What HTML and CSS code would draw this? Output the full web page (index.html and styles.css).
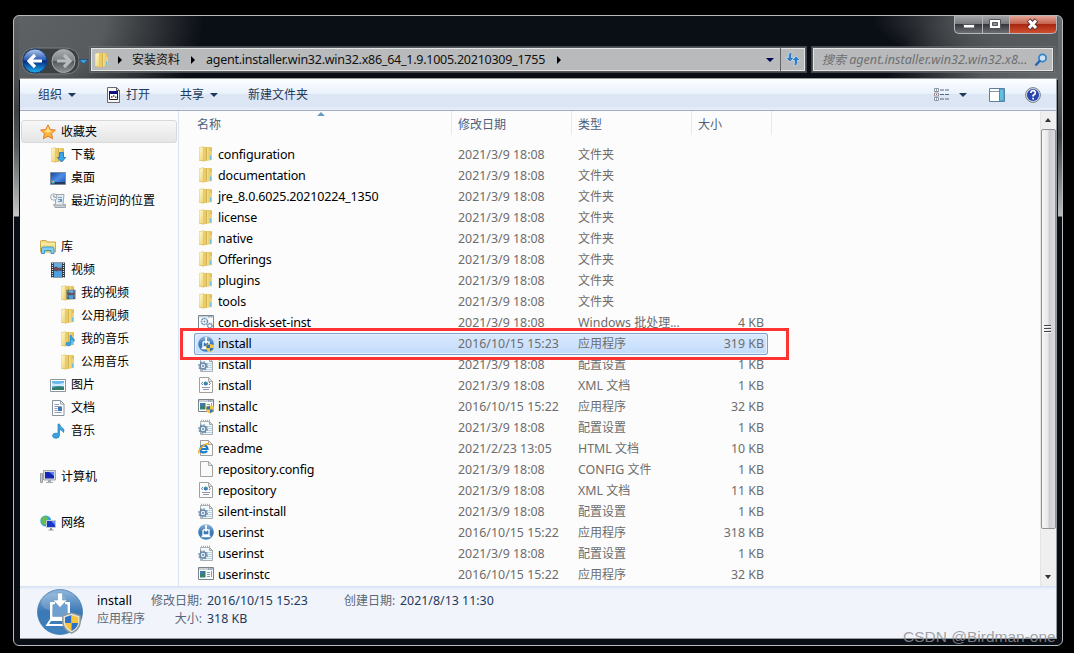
FILE: index.html
```html
<!DOCTYPE html>
<html lang="zh-CN">
<head>
<meta charset="utf-8">
<title>安装资料</title>
<link rel="stylesheet" href="styles.css">
</head>
<body>
<svg class="defs" width="0" height="0" aria-hidden="true">
  <defs>
    <linearGradient id="gFold" x1="0" y1="0" x2="1" y2="1"><stop offset="0" stop-color="#fffbd0"/><stop offset="1" stop-color="#eed16f"/></linearGradient>
    <linearGradient id="gFold2" x1="0" y1="0" x2="1" y2="0"><stop offset="0" stop-color="#c79f3c"/><stop offset=".3" stop-color="#f1dc83"/><stop offset="1" stop-color="#e2bf58"/></linearGradient>
    <linearGradient id="gBlue" x1="0" y1="0" x2="0" y2="1"><stop offset="0" stop-color="#8fb7dc"/><stop offset=".5" stop-color="#3b78b5"/><stop offset="1" stop-color="#3f83be"/></linearGradient>
    <linearGradient id="gScreen" x1="0" y1="0" x2="1" y2="1"><stop offset="0" stop-color="#1b3f9c"/><stop offset=".5" stop-color="#4c8ee8"/><stop offset="1" stop-color="#1c4fae"/></linearGradient>
    <linearGradient id="gBack" x1="0" y1="0" x2="0" y2="1"><stop offset="0" stop-color="#b4cbea"/><stop offset=".45" stop-color="#2b5bb4"/><stop offset=".5" stop-color="#06297e"/><stop offset="1" stop-color="#20b4f4"/></linearGradient>
    <linearGradient id="gFwd" x1="0" y1="0" x2="0" y2="1"><stop offset="0" stop-color="#aaaeb0"/><stop offset=".48" stop-color="#7d8284"/><stop offset=".52" stop-color="#54595b"/><stop offset="1" stop-color="#8b9092"/></linearGradient>
  </defs>
  <symbol id="folder" viewBox="0 0 16 16"><path d="M1 1.500 4.500.5 7 1h6l1 1v12l-5 .5-3.500 1L1 14.500z" fill="#dcb857"/><path d="M1.300 1.800 5.500.8v14L1.300 14z" fill="url(#gFold)"/><path d="M5.500 1.200 8 1v13.500l-2.500.8z" fill="#e8cc6c"/><path d="M8 1.200h5v12.600l-5 .6z" fill="url(#gFold2)"/><path d="M12.300 5h1.500v8.500h-1.500z" fill="#f0d988"/><path d="M12 9.500h1.300v4H12z" fill="#69bfe6"/></symbol>
  <symbol id="app" viewBox="0 0 16 16"><circle cx="8" cy="8" r="7.800" fill="url(#gBlue)"/><path d="M5 6v5h6V6H9.500M6.500 6H5M3.500 12.500h9" fill="none" stroke="#fff" stroke-width="1.300"/><path d="M7.200 1h1.700v4h1.500L8 8 5.800 5h1.400z" fill="#fff"/></symbol>
  <symbol id="shield" viewBox="0 0 16 16"><path d="M8 1 14 3v5q-1 5-6 7Q3 13 2 8V3z" fill="#e6e6df" stroke="#8d9699"/><path d="M3.500 4 8 2.500V8H3.500z" fill="#2c71c4"/><path d="M8 2.500 12.700 4v4H8zM3.500 8H8v5.500Q4.500 12 3.500 8z" fill="#f7c63c"/><path d="M8 8h4.700q-1 4-4.700 5.500z" fill="#2c71c4"/></symbol>
  <symbol id="smallshield" viewBox="0 0 8 8"><path d="M4 0 8 1v3Q7.500 7 4 8 .5 7 0 4V1z" fill="#f7c63c"/><path d="M.5 1.300 4 .5V4H.500zM4 4h3.500Q7 6.500 4 7.500z" fill="#2c71c4"/></symbol>
  <symbol id="appshield" viewBox="0 0 16 16"><use href="#app"/><use href="#smallshield" x="8" y="8" width="8" height="8"/></symbol>
  <symbol id="ini" viewBox="0 0 16 16"><path d="M2.500 2.500h9l3 3v10h-12z" fill="#f5f8fa" stroke="#a9b0b4"/><path d="M11.500 2.500v3h3z" fill="#dfe3e5" stroke="#a0a7ab"/><path d="M3 .8h1v2.200H3zm2 0h1v2.200H5zm2 0h1v2.200H7zm2 0h1v2.200H9zm2 0h1v2.200h-1z" fill="#a5adb2"/><path d="M4 7.500h10M4 9.500h10M4 11.500h10M4 13.500h10" stroke="#b4d3e6"/><circle cx="5" cy="10" r="3" fill="#e9eff5" stroke="#6888a8" stroke-width="1.600"/><circle cx="5" cy="10" r="4.300" fill="none" stroke="#6f8daa" stroke-width="1.200" stroke-dasharray="1.500 1.870"/><circle cx="5" cy="10" r="1" fill="#6888a8"/></symbol>
  <symbol id="xml" viewBox="0 0 16 16"><path d="M1.500.5h9l4 4v11h-13z" fill="#fdfdfd" stroke="#a0a0a0"/><path d="M10.500.5v4h4z" fill="#e5e5e5" stroke="#a8a8a8"/><circle cx="7.800" cy="6.500" r="2.100" fill="#3378bd"/><path d="M7 5h2l-1 2z" fill="#4bb35d"/><path d="M4.800 5 3.500 6.500 4.800 8M11 5l1.300 1.500L11 8" fill="none" stroke="#67758b"/><path d="M4 10.500h8M5 12.500h6" stroke="#9697a9"/></symbol>
  <symbol id="bat" viewBox="0 0 16 16"><path d="M.5 1.500h15v13H.5z" fill="#f8fafc" stroke="#7a8791"/><path d="M1 2h14v1.500H1z" fill="#c9d3da"/><path d="M10 2.800h4" stroke="#7d8994" stroke-dasharray="1 .5"/><circle cx="6.500" cy="7.500" r="3" fill="#fff" stroke="#6a90b4" stroke-width="1.500" stroke-dasharray="1.600 .5"/><circle cx="6.500" cy="7.500" r="1" fill="#6a90b4"/><circle cx="11.800" cy="11.800" r="2.200" fill="#fff" stroke="#6585a6" stroke-width="1.500" stroke-dasharray="1.300 .4"/></symbol>
  <symbol id="exe" viewBox="0 0 16 16"><path d="M.5 1.500h15v12H.5z" fill="#fff" stroke="#78838b"/><path d="M1 2h14v2H1z" fill="#c7d0d6"/><path d="M10 3h5" stroke="#667b90" stroke-dasharray="1 .7"/><path d="M2 5h5.500v6.500H2z" fill="#397f70"/><path d="M2 5h3v3H2z" fill="#417bb4"/><path d="M9 6.500h3M9 8.500h3M9 10.500h3M13.500 5v6" stroke="#8a9cac"/></symbol>
  <symbol id="exeshield" viewBox="0 0 16 16"><use href="#exe"/><use href="#smallshield" x="8" y="7" width="8" height="9"/></symbol>
  <symbol id="html" viewBox="0 0 16 16"><path d="M2.500.5h8l4 4v11h-12z" fill="#fdfdfd" stroke="#a0a0a0"/><path d="M10.500.5v4h4z" fill="#e5e5e5" stroke="#a8a8a8"/><path d="M2.700 9h6.800Q9 5.500 6 5.500T2.500 9 6 12.300q2 0 3-1.500" fill="none" stroke="#1c7dd0" stroke-width="2.200"/><path d="M1 13.500Q-.2 11 4 7t7-3" fill="none" stroke="#edae24" stroke-width="1.400"/></symbol>
  <symbol id="blank" viewBox="0 0 16 16"><path d="M2.500.5h8l4 4v11h-12z" fill="#fafafa" stroke="#a3a3a3"/><path d="M10.500.5v4h4z" fill="#e8e8e8" stroke="#a8a8a8"/></symbol>
  <symbol id="star" viewBox="0 0 16 16"><path d="m8 .8 2.200 4.700 5.200.6-3.900 3.500 1.100 5.100L8 12.200l-4.600 2.500 1.100-5.100L.6 6.100l5.200-.6z" fill="#fbb540" stroke="#e27b25"/><path d="m8 2.500 1.500 4 3 .4L8 8.500 3.500 7l3-.5z" fill="#ffe793"/></symbol>
  <symbol id="download" viewBox="0 0 16 16"><use href="#folder"/><path d="M9.500 5.500h4v5h2.300L11.500 15 7.300 10.500h2.200z" fill="#3ba5ee" stroke="#1c6eb7" stroke-width=".8"/></symbol>
  <symbol id="desktop" viewBox="0 0 16 16"><path d="M.5 2.500h15v12H.5z" fill="url(#gScreen)" stroke="#7b8ca0"/><path d="M1 12h14v2H1z" fill="#243b60"/><circle cx="3" cy="12" r="1.800" fill="#51b4d5"/><path d="M2 11h1v1H2z" fill="#ec6b3c"/><path d="M3 11h1v1H3z" fill="#a7d952"/></symbol>
  <symbol id="recent" viewBox="0 0 16 16"><path d="M5.500 1.500H14l-1 10h2.500v3H5l-1.500-3h2z" fill="#e8ecef" stroke="#9ba6ae"/><path d="M8 4.500h4M8 6.500h3M8 8.500h4" stroke="#73a1c6"/><path d="M10 6h2v2h-2z" fill="#4f96ce"/><path d="M4 12.500h11" stroke="#aeb8be" stroke-width="2"/><circle cx="3.800" cy="4" r="3.200" fill="#f6f8f9" stroke="#9ba6ae"/><path d="M3.800 2v2.200H6" fill="none" stroke="#69747e" stroke-width=".8"/></symbol>
  <symbol id="library" viewBox="0 0 16 16"><path d="M.5 3.500V2L1.500 1.500H6l1 1.500h8.500v10H.5z" fill="#f2df85" stroke="#cca94c"/><path d="M1 5h14" stroke="#fff6bb"/><path d="M1.500 14.500V10q0-2 2-2h8.500q2 0 2 2v4.500h-3V11.500H4.500v3z" fill="#83cdef" stroke="#3c98c8"/></symbol>
  <symbol id="video" viewBox="0 0 16 16"><path d="M1 .5h14v15H1z" fill="#303941"/><path d="M4 1h8v6.500H4z" fill="#68ade1"/><path d="M4 8.500h8V15H4z" fill="#4aa0e3"/><path d="m4 5.500 2-1 3 1.500 3-1v4l-3-1-2 1.500-3-1z" fill="#684d58"/><path d="M2.500 1v15M13.500 1v15" stroke="#d9e1e6" stroke-width="1.200" stroke-dasharray="1 1"/></symbol>
  <symbol id="fvideo" viewBox="0 0 16 16"><use href="#folder"/><use href="#video" x="6" y="4" width="10" height="11"/></symbol>
  <symbol id="note" viewBox="0 0 16 16"><path d="M8 1h1.500q.5 2.500 3 4t1 4.500q-1-2.500-4-3v5.800q0 3-3.500 3-3 0-3.500-2.200 0-3 3.500-3l2 .4z" fill="#3aa3df" stroke="#2480bd" stroke-width=".7"/></symbol>
  <symbol id="fnote" viewBox="0 0 16 16"><use href="#folder"/><use href="#note" x="4" y="3" width="12" height="13"/></symbol>
  <symbol id="picture" viewBox="0 0 16 16"><path d="M.5 2.500h15v12H.5z" fill="#fff" stroke="#8d969c"/><path d="M2 4h12v9H2z" fill="#69b8eb"/><path d="M2 6q4 2 12 0v3H2z" fill="#cfeafa"/><path d="M2 11q5-3 12-1v3H2z" fill="#327d6b"/></symbol>
  <symbol id="doc" viewBox="0 0 16 16"><path d="M2.500.5h8l3.500 3.500v11.500H2.500z" fill="#fdfdfd" stroke="#89929a"/><path d="M10.500.5V4H14M4.500 4.500H9M4.500 6.500h7M4.500 8.500h3M4.500 10.500h3M4.500 12.500h7" fill="none" stroke="#8ca0b8"/><path d="M8 7h4v4H8z" fill="#3e78b8"/></symbol>
  <symbol id="computer" viewBox="0 0 16 16"><path d="M.5 4.500h2v9h-2z" fill="#c8cdcf" stroke="#979ea1"/><path d="M3.500 1.500h12v9.500h-12z" fill="#d9dcde" stroke="#9fa7ac"/><path d="M5 3h9v6.500H5z" fill="#1426b5"/><path d="M9 3h5v4z" fill="#577df0"/><path d="M8 11h3v2h2v1H6v-1h2z" fill="#a3aab0"/></symbol>
  <symbol id="network" viewBox="0 0 16 16"><circle cx="5.800" cy="6" r="5.500" fill="#3ba4df"/><path d="M2 2q3 0 4-1.500L8 4 6 6l1 3-4 1Q1 7 2 2z" fill="#67bd55"/><path d="M6.500 5.500h9v7h-9z" fill="#1836c8" stroke="#c4cbd0"/><path d="M11 6h4v4z" fill="#668cf0"/><path d="M10 13h2v1.500h1.500v1h-5v-1H10z" fill="#8e999e"/></symbol>
</svg>

<main class="window">
  <header class="frame-top">
    <div class="caption">
      <span class="cap min"><svg width="28" height="17"><path d="M9.500 8.500h11v3.500h-11z" fill="#fff" stroke="#51545a"/></svg></span>
      <span class="cap max"><svg width="26" height="17"><path d="M7.500 3.500h11v9h-11z" fill="#fff" stroke="#51545a"/><path d="M10.500 6.500h5v3h-5z" fill="#8d8f93" stroke="#51545a"/></svg></span>
      <span class="cap close"><svg width="47" height="17"><path d="m19.500 4 8 8.500m0-8.500-8 8.500" stroke="#60383a" stroke-width="5"/><path d="m20 4.500 7 7.500m0-7.500-7 7.500" stroke="#fff" stroke-width="3"/></svg></span>
    </div>
    <div class="navbar">
      <svg class="nav-buttons" width="69" height="28"><path d="M14 1h30q14 0 14 13T44 27H14Q1 27 1 14T14 1z" fill="#3c4043" stroke="#777c80"/><circle cx="14" cy="14" r="12" fill="url(#gBack)" stroke="#183e79"/><path d="M8 14h13M14 8l-6 6 6 6" fill="none" stroke="#fff" stroke-width="3.200"/><circle cx="42.500" cy="14" r="11.500" fill="url(#gFwd)" stroke="#a8acae"/><path d="M36 14h13M43 8l6 6-6 6" fill="none" stroke="#b8bcbe" stroke-width="3.200"/><path d="M58 12.500h9l-4.500 4.500z" fill="#3ba1e2" stroke="#164a79" stroke-width=".8"/></svg>
      <div class="address">
        <svg class="i16"><use href="#folder"/></svg>
        <i class="tri right a1"></i><span class="crumb1">安装资料</span>
        <i class="tri right a2"></i><span class="crumb2">agent.installer.win32.win32.x86_64_1.9.1005.20210309_1755</span>
        <i class="tri right a3"></i>
        <i class="tri down history"></i>
        <span class="refresh"><svg width="16" height="16"><path d="M7 1Q3.500 1 3.500 4.500V6.500H.8L5 11l4.200-4.500H6.500V4.500zM9 15q3.500 0 3.500-3.500V9.500h2.700L11 5 6.800 9.500h2.700v2z" fill="#2d7cc6" stroke="#e3edf3" stroke-width=".6"/></svg></span>
      </div>
      <div class="search"><span>搜索 <b>agent.installer.win32.win32.x8...</b></span>
        <svg width="14" height="14"><circle cx="8.500" cy="5" r="3.600" fill="#d2e1ef" stroke="#3486cb" stroke-width="1.800"/><path d="m6 7.500-4.500 5" stroke="#2566b5" stroke-width="2.400"/></svg></div>
    </div>
  </header>

  <div class="client">
    <nav class="toolbar">
      <span class="t-org">组织<i class="tri down"></i></span>
      <span class="t-open"><svg width="15" height="16"><path d="M1.500.5h9l3 3v12h-12z" fill="#f7f7f7" stroke="#6a6a6a"/><path d="M10.500.5v3h3" fill="none" stroke="#555"/><path d="M3.500 4.500h8v8h-8z" fill="#fff" stroke="#222"/><path d="M3 4h9v3H3z" fill="#101080"/><path d="M5 9h1.500v2H5z" fill="#d43b3b"/><path d="M7 8h1.500v2H7z" fill="#30a040"/><path d="M9 9.500h1.500V11H9z" fill="#3044d0"/></svg>打开</span>
      <span class="t-share">共享<i class="tri down"></i></span>
      <span class="t-new">新建文件夹</span>
      <svg class="t-view" width="16" height="14"><path d="M.5.500h4v3h-4zm0 4.500h4v3h-4zm0 4.500h4v3h-4z" fill="#fff" stroke="#8995a2"/><path d="M2 2h1M2 11h1" stroke="#345" /><path d="M2 6.500h1" stroke="#e33"/><path d="M6 2h9M6 6.500h9M6 11h9" stroke="#536a84" stroke-dasharray="4 1"/></svg>
      <i class="tri down t-viewtri"></i>
      <svg class="t-pane" width="16" height="14"><path d="M.5.500h15v13H.5z" fill="#fff" stroke="#5c7f9e"/><path d="M1 3.500h9" stroke="#8097ac"/><path d="M10.500 1H15v12h-4.500z" fill="#63bfe0" stroke="#508aad"/></svg>
      <svg class="t-help" width="16" height="16"><circle cx="8" cy="8" r="7.400" fill="#d8dce3" stroke="#7b828c"/><circle cx="8" cy="8" r="6" fill="#2946ae"/><path d="M5.800 6q0-2.300 2.300-2.300T10.300 6Q10.300 7.200 8.100 8.500V9.600M8.100 10.700v1.700" fill="none" stroke="#fff" stroke-width="1.700"/></svg>
    </nav>

    <div class="body">
      <aside class="tree">
        <div class="node l0 active"><svg class="i16"><use href="#star"/></svg>收藏夹</div>
        <div class="node l1"><svg class="i16"><use href="#download"/></svg>下载</div>
        <div class="node l1"><svg class="i16"><use href="#desktop"/></svg>桌面</div>
        <div class="node l1"><svg class="i16"><use href="#recent"/></svg>最近访问的位置</div>
        <div class="node l0 group"><svg class="i16"><use href="#library"/></svg>库</div>
        <div class="node l1"><svg class="i16"><use href="#video"/></svg>视频</div>
        <div class="node l2"><svg class="i16"><use href="#fvideo"/></svg>我的视频</div>
        <div class="node l2"><svg class="i16"><use href="#folder"/></svg>公用视频</div>
        <div class="node l2"><svg class="i16"><use href="#fnote"/></svg>我的音乐</div>
        <div class="node l2"><svg class="i16"><use href="#folder"/></svg>公用音乐</div>
        <div class="node l1"><svg class="i16"><use href="#picture"/></svg>图片</div>
        <div class="node l1"><svg class="i16"><use href="#doc"/></svg>文档</div>
        <div class="node l1"><svg class="i16"><use href="#note"/></svg>音乐</div>
        <div class="node l0 group"><svg class="i16"><use href="#computer"/></svg>计算机</div>
        <div class="node l0 group"><svg class="i16"><use href="#network"/></svg>网络</div>
      </aside>

      <section class="list">
        <div class="heads"><span>名称</span><span>修改日期</span><span>类型</span><span>大小</span><i class="sort"></i></div>
        <div class="row"><svg class="i16"><use href="#folder"/></svg><b>configuration</b><span>2021/3/9 18:08</span><em>文件夹</em><u></u></div>
        <div class="row"><svg class="i16"><use href="#folder"/></svg><b>documentation</b><span>2021/3/9 18:08</span><em>文件夹</em><u></u></div>
        <div class="row"><svg class="i16"><use href="#folder"/></svg><b>jre_8.0.6025.20210224_1350</b><span>2021/3/9 18:08</span><em>文件夹</em><u></u></div>
        <div class="row"><svg class="i16"><use href="#folder"/></svg><b>license</b><span>2021/3/9 18:08</span><em>文件夹</em><u></u></div>
        <div class="row"><svg class="i16"><use href="#folder"/></svg><b>native</b><span>2021/3/9 18:08</span><em>文件夹</em><u></u></div>
        <div class="row"><svg class="i16"><use href="#folder"/></svg><b>Offerings</b><span>2021/3/9 18:08</span><em>文件夹</em><u></u></div>
        <div class="row"><svg class="i16"><use href="#folder"/></svg><b>plugins</b><span>2021/3/9 18:08</span><em>文件夹</em><u></u></div>
        <div class="row"><svg class="i16"><use href="#folder"/></svg><b>tools</b><span>2021/3/9 18:08</span><em>文件夹</em><u></u></div>
        <div class="row"><svg class="i16"><use href="#bat"/></svg><b>con-disk-set-inst</b><span>2021/3/9 18:08</span><em><s>Windows </s>批处理...</em><u>4 KB</u></div>
        <div class="row selected"><svg class="i16"><use href="#appshield"/></svg><b>install</b><span>2016/10/15 15:23</span><em>应用程序</em><u>319 KB</u></div>
        <div class="row"><svg class="i16"><use href="#ini"/></svg><b>install</b><span>2021/3/9 18:08</span><em>配置设置</em><u>1 KB</u></div>
        <div class="row"><svg class="i16"><use href="#xml"/></svg><b>install</b><span>2021/3/9 18:08</span><em><s>XML </s>文档</em><u>1 KB</u></div>
        <div class="row"><svg class="i16"><use href="#exeshield"/></svg><b>installc</b><span>2016/10/15 15:22</span><em>应用程序</em><u>32 KB</u></div>
        <div class="row"><svg class="i16"><use href="#ini"/></svg><b>installc</b><span>2021/3/9 18:08</span><em>配置设置</em><u>1 KB</u></div>
        <div class="row"><svg class="i16"><use href="#html"/></svg><b>readme</b><span>2021/2/23 13:05</span><em><s>HTML </s>文档</em><u>10 KB</u></div>
        <div class="row"><svg class="i16"><use href="#blank"/></svg><b>repository.config</b><span>2021/3/9 18:08</span><em><s>CONFIG </s>文件</em><u>1 KB</u></div>
        <div class="row"><svg class="i16"><use href="#xml"/></svg><b>repository</b><span>2021/3/9 18:08</span><em><s>XML </s>文档</em><u>11 KB</u></div>
        <div class="row"><svg class="i16"><use href="#ini"/></svg><b>silent-install</b><span>2021/3/9 18:08</span><em>配置设置</em><u>1 KB</u></div>
        <div class="row"><svg class="i16"><use href="#app"/></svg><b>userinst</b><span>2016/10/15 15:22</span><em>应用程序</em><u>318 KB</u></div>
        <div class="row"><svg class="i16"><use href="#ini"/></svg><b>userinst</b><span>2021/3/9 18:08</span><em>配置设置</em><u>1 KB</u></div>
        <div class="row"><svg class="i16"><use href="#exe"/></svg><b>userinstc</b><span>2016/10/15 15:22</span><em>应用程序</em><u>32 KB</u></div>
      </section>

      <div class="scrollbar"><i class="tri up"></i><div class="thumb"><i class="grip"></i></div><i class="tri down"></i></div>
    </div>

    <footer class="details">
      <svg class="big" width="46" height="46" viewBox="0 0 46 46"><circle cx="23" cy="23" r="22.500" fill="url(#gBlue)" stroke="#3571aa" stroke-width=".7"/><ellipse cx="17" cy="13" rx="13" ry="9" fill="#fff" opacity=".16"/><path d="M13 13h5v2.500h-2.500v12h15v-12H28V13h5v17H13z" fill="#fff"/><path d="M16 15.500h14v12H16z" fill="#6ea0cf"/><path d="M13 30h20l5 7H8.500zM14 32l-2 3h20l-2-3z" fill="#fff" fill-rule="evenodd"/><path d="M20.500 4h5v7h4.500L23 18.500 16 11h4.500z" fill="#fff" stroke="#6b9ac5" stroke-width=".6"/><use href="#shield" x="23" y="22" width="23" height="24"/></svg>
      <div class="info">
        <span class="name">install</span><span class="label">修改日期:</span><span class="val">2016/10/15 15:23</span><span class="label created">创建日期:</span><span class="val">2021/8/13 11:30</span>
        <span class="kind">应用程序</span><span class="label">大小:</span><span class="val">318 KB</span>
      </div>
    </footer>
  </div>
</main>
<div class="highlight"></div>
<div class="watermark">CSDN @Birdman-one</div>
</body>
</html>
```
FILE: styles.css
```css
* { box-sizing: border-box; }
body {
  margin: 0;
  width: 1074px;
  height: 653px;
  padding: 15px 0 0 13px;
  background: #000;
  overflow: hidden;
  position: relative;
  font: 12px/20px "Noto Sans", "Noto Sans CJK SC", sans-serif;
}
.defs { position: absolute; }
b, em, u, i, s { font-style: normal; font-weight: normal; text-decoration: none; }
.i16 { width: 16px; height: 16px; flex: none; display: block; }

.window {
  width: 1050px;
  height: 631px;
  border: 1px solid #b9bcbe;
  border-radius: 6px;
  padding: 0 5px 6px 6px;
  overflow: hidden;
  background:
    linear-gradient(#5d6062 0, #4c4f52 64px, #3c4043 95px, #555a5c 130px, #c5c7c8 200px, transparent 201px) 0 0 / 5px 202px no-repeat,
    linear-gradient(#696d70 0, #626669 60px, #3b4043 120px, #b9bbbc 200px, transparent 201px) 100% 0 / 4px 202px no-repeat,
    radial-gradient(ellipse 190px 140px at 0 0, #5f6264 0, #585b5d 48%, #3a3d40 68%, rgba(10,14,21,0) 100%) 0 0 / 200px 64px no-repeat,
    radial-gradient(ellipse 175px 90px at 100% 64px, #66696c 0, #565a5c 45%, rgba(10,14,21,0) 100%) 100% 0 / 200px 64px no-repeat,
    radial-gradient(ellipse 190px 60px at 100% 0, #66696c 0, #4c4f52 55%, rgba(10,14,21,0) 100%) 100% 0 / 200px 64px no-repeat,
    #0a0e15;
}
.frame-top { height: 62px; }
.caption { height: 18px; display: flex; justify-content: flex-end; }
.cap {
  height: 18px;
  border: 1px solid #b4b6b9;
  border-top: 0;
  border-right: 0;
  background: linear-gradient(#a3a4a6, #77797c 48%, #35383e 50%, #6c6e73);
}
.cap svg { display: block; margin-left: -1px; }
.min { width: 28px; border-radius: 0 0 0 5px; }
.max { width: 27px; }
.close { width: 48px; border-right: 1px solid #b4b6b9; border-radius: 0 0 5px 0; background: linear-gradient(#e3a598, #c4604b 48%, #a92611 50%, #cf5030); }
.navbar { display: flex; margin: 13px 0 0 1px; height: 28px; }
.nav-buttons { flex: none; }
.address, .search {
  height: 25px;
  border: 1px solid #54585b;
  outline: 1px solid rgba(120,124,127,.5);
  background: #b9babc;
  box-shadow: inset 0 0 0 1px #e4e5e5;
  display: flex;
  align-items: center;
}
.address { width: 716px; padding-left: 3px; color: #111; }
.tri { width: 0; height: 0; flex: none; display: inline-block; border: 4px solid transparent; }
.tri.down { border-top-color: #1e395b; border-bottom: 0; }
.tri.right { border-left-color: #000; border-right: 0; }
.tri.up { border-bottom-color: #333; border-top: 0; }
.a1 { margin-left: 8px; }
.crumb1 { margin-left: 10px; }
.a2 { margin-left: 11px; }
.crumb2 { margin-left: 11px; width: 341px; font-size: 12.500px; letter-spacing: -.25px; white-space: nowrap; }
.a3 { margin-left: 10px; }
.history.tri { margin-left: auto; border-top-color: #00005d; margin-right: 6px; }
.refresh { width: 25px; height: 23px; border-left: 1px solid #626568; padding: 3px 4px; }
.search { width: 242px; margin-left: 6px; padding: 0 5px 0 9px; justify-content: space-between; color: #6e7072; font-style: italic; white-space: nowrap; }
.search b { font-style: italic; font-size: 12.600px; }

.client { height: 561px; border: 1px solid #999c9f; border-width: 1px 1px 1px 0; }
.toolbar {
  height: 32px;
  display: flex;
  align-items: center;
  color: #1e395b;
  background: linear-gradient(#fdfeff, #eaf2fc 46%, #dce6f4 49%, #dbe5f3 90%, #e6edf9 94%);
  border-bottom: 1px solid #a0afc7;
}
.toolbar .tri { margin-left: 6px; vertical-align: 2px; }
.toolbar > span { white-space: nowrap; }
.t-org { margin-left: 18px; width: 68px; }
.t-open { display: flex; align-items: center; gap: 5px; width: 74px; }
.t-share { width: 68px; }
.t-view { margin-left: auto; }
.toolbar .t-viewtri { margin-left: 9px; }
.t-pane { margin-left: 22px; }
.t-help { margin: 0 15px 0 20px; }

.body { height: 475px; display: flex; background: #fcfcfc; }
.tree { width: 159px; padding-top: 9px; border-right: 1px solid #d6e5f5; color: #000; }
.node { height: 23px; display: flex; align-items: center; gap: 5px; }
.l0 { padding-left: 20px; }
.l1 { padding-left: 30px; }
.l2 { padding-left: 40px; }
.group { margin-top: 23px; }
.active { margin: 0 1px; padding-left: 18px; border: 1px solid #d9d9d9; border-radius: 3px; background: linear-gradient(#f8f8f8, #e5e5e5); }

.list { flex: 1; }
.heads { position: relative; height: 33px; display: grid; grid-template-columns: 255px 120px 120px 80px; margin-left: 18px; color: #4c607a; line-height: 27px; }
.heads span { height: 24px; border-right: 1px solid #e2eaf4; }
.heads span:nth-child(n+2) { padding-left: 6px; }
.sort { position: absolute; left: 120px; top: 1px; border: 4px solid transparent; border-top: 0; border-bottom-color: #6a9dbd; }
.row {
  height: 21px;
  display: grid;
  grid-template-columns: 20px 240px 120px 106px 80px;
  width: 574px;
  margin-left: 15px;
  padding-left: 4px;
  align-items: center;
  color: #6d6d6d;
  white-space: nowrap;
}
.row .i16 { margin-top: -1px; }
.row b { color: #000; font-size: 12.500px; letter-spacing: -.18px; }
.row span, .row s, .row u { font-size: 12.400px; }
.row u { text-align: right; }
.selected { border-radius: 3px; background: linear-gradient(#dceafc, #c1dbfc); box-shadow: inset 0 0 0 1px #7da2ce, inset 0 0 0 2px #e7f1fd; height: 22px; margin-bottom: -1px; }

.scrollbar { width: 16px; background: #efefef; display: flex; flex-direction: column; align-items: center; border-left: 1px solid #e4e4e4; }
.scrollbar .tri { border-left-width: 3.500px; border-right-width: 3.500px; margin-right: 1px; }
.scrollbar .up { margin: 7px 1px 7px 0; }
.thumb { width: 15px; height: 400px; flex: none; border: 1px solid #929292; border-radius: 2px; background: linear-gradient(90deg, #f6f6f6, #e8e8ea 45%, #cdcdd1 55%, #dcdce0); display: flex; align-items: center; justify-content: center; }
.grip { width: 7px; height: 8px; margin-right: 2px; background: repeating-linear-gradient(#444 0 1px, #f8f8f8 1px 2px, transparent 2px 3px); }
.scrollbar .down { margin-top: 46px; border-top-color: #333; }

.details { height: 52px; display: flex; padding: 2px 0 0 17px; background: linear-gradient(#d3e0f0 0, #e4ecf8 2px, #f1f5fb 4px); }
.big { margin-top: 1px; }
.info { margin-left: 14px; padding-top: 4px; display: grid; grid-template-columns: 54px 51px 5px 137px 56px 130px; grid-template-rows: 18px 18px; line-height: 18px; color: #1e395b; white-space: nowrap; }
.info .name { color: #000; font-size: 12.500px; }
.info .label { color: #5a6779; text-align: right; }
.info .val { font-size: 12.400px; grid-column: 4; }
.info .label { grid-column: 2; }
.info .label.created { grid-column: 5; text-align: left; }
.info .created + .val { grid-column: 6; }
.info .name, .info .kind { grid-column: 1; }
.kind { color: #5a6779; }

.highlight { position: absolute; left: 180px; top: 328px; width: 609px; height: 32px; border: 3px solid #ff3331; }
.watermark { position: absolute; left: 903px; top: 627px; width: 160px; white-space: nowrap; font: 15.500px/20px "Liberation Sans", Arial, sans-serif; color: rgba(145,145,148,.85); }
```
